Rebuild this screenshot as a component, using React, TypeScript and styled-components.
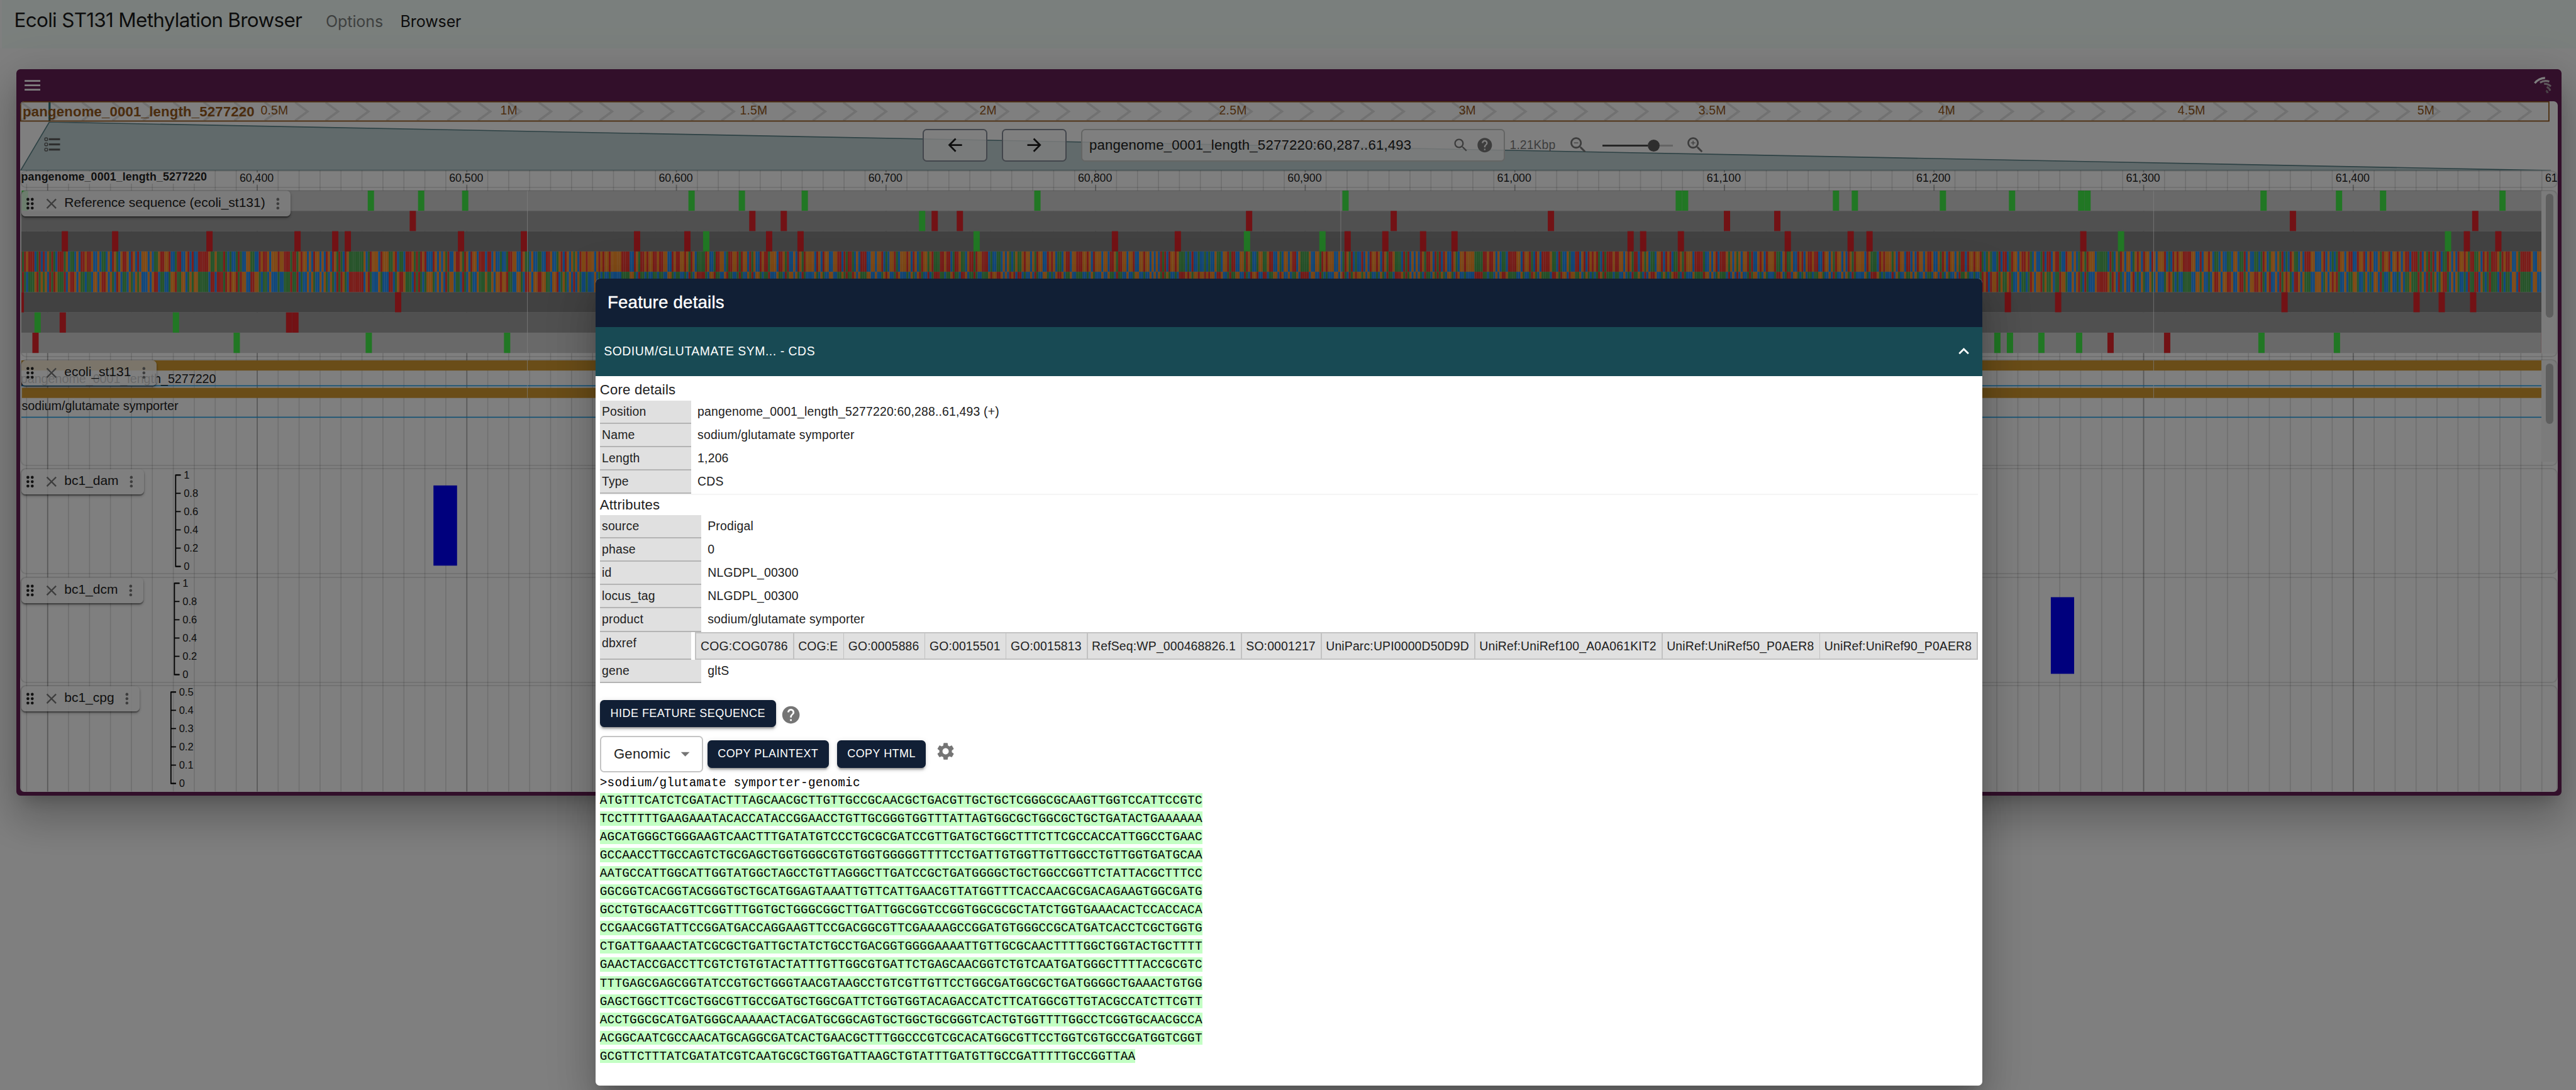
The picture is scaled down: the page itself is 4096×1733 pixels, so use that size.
import React from 'react';
import styled, { createGlobalStyle } from 'styled-components';

const SANS = '"Liberation Sans", Arial, Helvetica, sans-serif';
const MONO = '"Liberation Mono", "Courier New", monospace';

const SEQ_LINES = [
  'ATGTTTCATCTCGATACTTTAGCAACGCTTGTTGCCGCAACGCTGACGTTGCTGCTCGGGCGCAAGTTGGTCCATTCCGTC',
  'TCCTTTTTGAAGAAATACACCATACCGGAACCTGTTGCGGGTGGTTTATTAGTGGCGCTGGCGCTGCTGATACTGAAAAAA',
  'AGCATGGGCTGGGAAGTCAACTTTGATATGTCCCTGCGCGATCCGTTGATGCTGGCTTTCTTCGCCACCATTGGCCTGAAC',
  'GCCAACCTTGCCAGTCTGCGAGCTGGTGGGCGTGTGGTGGGGGTTTTCCTGATTGTGGTTGTTGGCCTGTTGGTGATGCAA',
  'AATGCCATTGGCATTGGTATGGCTAGCCTGTTAGGGCTTGATCCGCTGATGGGGCTGCTGGCCGGTTCTATTACGCTTTCC',
  'GGCGGTCACGGTACGGGTGCTGCATGGAGTAAATTGTTCATTGAACGTTATGGTTTCACCAACGCGACAGAAGTGGCGATG',
  'GCCTGTGCAACGTTCGGTTTGGTGCTGGGCGGCTTGATTGGCGGTCCGGTGGCGCGCTATCTGGTGAAACACTCCACCACA',
  'CCGAACGGTATTCCGGATGACCAGGAAGTTCCGACGGCGTTCGAAAAGCCGGATGTGGGCCGCATGATCACCTCGCTGGTG',
  'CTGATTGAAACTATCGCGCTGATTGCTATCTGCCTGACGGTGGGGAAAATTGTTGCGCAACTTTTGGCTGGTACTGCTTTT',
  'GAACTACCGACCTTCGTCTGTGTACTATTTGTTGGCGTGATTCTGAGCAACGGTCTGTCAATGATGGGCTTTTACCGCGTC',
  'TTTGAGCGAGCGGTATCCGTGCTGGGTAACGTAAGCCTGTCGTTGTTCCTGGCGATGGCGCTGATGGGGCTGAAACTGTGG',
  'GAGCTGGCTTCGCTGGCGTTGCCGATGCTGGCGATTCTGGTGGTACAGACCATCTTCATGGCGTTGTACGCCATCTTCGTT',
  'ACCTGGCGCATGATGGGCAAAAACTACGATGCGGCAGTGCTGGCTGCGGGTCACTGTGGTTTTGGCCTCGGTGCAACGCCA',
  'ACGGCAATCGCCAACATGCAGGCGATCACTGAACGCTTTGGCCCGTCGCACATGGCGTTCCTGGTCGTGCCGATGGTCGGT',
  'GCGTTCTTTATCGATATCGTCAATGCGCTGGTGATTAAGCTGTATTTGATGTTGCCGATTTTTGCCGGTTAA',
];
const SEQ = SEQ_LINES.join('');

const BP = 4.1302;
const TRACK_W = 4966;
const BLOCK_EDGES = [996.5, 2599.3, 4201];

const BASE_COLOR: Record<string, string> = { A: '#4ea855', C: '#2590f6', G: '#ff922a', T: '#f43a32' };
const COMPLEMENT: Record<string, string> = { A: 'T', T: 'A', C: 'G', G: 'C' };
const START = '#42ee48';
const STOP = '#e4252a';

const GlobalStyle = createGlobalStyle`
  html, body { margin: 0; padding: 0; background: #808080; overflow: hidden; }
  *, *::before, *::after { box-sizing: border-box; }
`;

const Root = styled.div`
  position: relative;
  zoom: 0.80693;
  width: 5076px;
  height: 2148px;
  overflow: hidden;
  background: #fff;
  color: #212121;
  font-family: ${SANS};
  font-size: 24px;
`;

const Page = styled.div`
  height: 2148px;
  padding-left: 4px;
`;

const Navbar = styled.header`
  display: flex;
  align-items: flex-start;
  height: 96px;
  padding: 16px 24px;
  background: #f5fffa;
  white-space: nowrap;
`;

const Brand = styled.div`
  width: 611px;
  font-family: Inter, ${SANS};
  font-size: 39px;
  line-height: 48px;
  letter-spacing: -0.88px;
  color: #1a1a1a;
`;

const NavItem = styled.div<{ $active?: boolean }>`
  margin: 2px 31px 0 3px;
  font-family: Inter, ${SANS};
  font-size: 31px;
  line-height: 48px;
  letter-spacing: -0.1px;
  color: ${p => (p.$active ? '#1a1a1a' : '#7c807e')};
`;

const Frame = styled.main`
  width: 5016px;
  height: 1432px;
  margin: 40px 0 0 28px;
  padding: 0 8px 8px;
  background: #651e54;
  border-radius: 8px;
  box-shadow: 0 22px 30px -14px rgba(0, 0, 0, 0.2), 0 48px 76px 6px rgba(0, 0, 0, 0.14), 0 18px 92px 16px rgba(0, 0, 0, 0.12);
`;

const AppBar = styled.div`
  display: flex;
  align-items: center;
  justify-content: space-between;
  height: 64px;
  padding: 1px 6px 0 3.5px;
  color: #fff;
`;

const View = styled.div`
  position: relative;
  height: 1360px;
  background: #fff;
  border-radius: 8px;
  overflow: hidden;
`;

const Overview = styled.div`
  position: relative;
  height: 40px;
`;

const Drawing = styled.svg`
  display: block;
  flex: none;
`;

const Layer = styled.svg`
  position: absolute;
  left: 0;
  top: 0;
`;

const NavRow = styled.div`
  position: relative;
  display: flex;
  align-items: center;
  height: 96px;
  padding: 0 0 4px 42.7px;
`;

const NavButton = styled.div`
  position: relative;
  display: flex;
  align-items: center;
  justify-content: center;
  width: 128px;
  height: 64px;
  margin-right: 28px;
  border: 2.5px solid #868d98;
  border-radius: 8px;
  background: rgba(255, 255, 255, 0.8);
  color: #1c1c1c;
`;

const SearchBox = styled.div`
  position: relative;
  display: flex;
  align-items: center;
  width: 835px;
  height: 64px;
  padding: 0 20px 0 14px;
  border: 2.5px solid #c8cac9;
  border-radius: 8px;
  background: rgba(255, 255, 255, 0.8);
  font-size: 27.43px;
  letter-spacing: 0.257px;
  color: #7b7b7b;
`;

const SearchText = styled.span`
  flex: 1;
  color: #212121;
`;

const Icon = styled.svg<{ $size: number; $ml?: number }>`
  position: relative;
  flex: none;
  display: block;
  width: ${p => p.$size}px;
  height: ${p => p.$size}px;
  margin-left: ${p => p.$ml || 0}px;
  fill: currentColor;
`;

const BpSpan = styled.span`
  position: relative;
  width: 112px;
  margin-left: 10px;
  letter-spacing: 0.1px;
  color: #7b7b7b;
`;

const Slider = styled.div`
  position: relative;
  display: flex;
  align-items: center;
  width: 139px;
  height: 24px;
  margin: 2px 20px 0 27px;
`;

const SliderFill = styled.div`
  width: 90px;
  height: 4px;
  background: #4c4c4c;
`;

const SliderThumb = styled.div`
  width: 24px;
  height: 24px;
  border-radius: 50%;
  background: #5c5c5c;
`;

const SliderRest = styled.div`
  flex: 1;
  height: 4px;
  background: #c9c9c9;
`;

const NavTools = styled.div`
  display: flex;
  align-items: center;
  margin-left: 1693.3px;
  color: #7a7a7a;
`;

const Panel = styled.section<{ $h: number }>`
  position: relative;
  height: ${p => p.$h}px;
  margin-bottom: 4px;
  padding: 2px;
  &::after {
    content: '';
    position: absolute;
    inset: 0;
    border: 2.5px solid rgba(0, 0, 0, 0.1);
    border-radius: 12px;
    pointer-events: none;
  }
`;

const PanelContent = styled.div`
  display: flex;
`;

const ScrollRail = styled.div<{ $h: number }>`
  width: 30px;
  height: ${p => p.$h}px;
  padding: 6px 6px 0 8px;
  background: #f6f6f6;
`;

const ScrollThumb = styled.div<{ $h: number }>`
  height: ${p => p.$h}px;
  border-radius: 8px;
  background: #bcbcbc;
`;

const TrackLabel = styled.div`
  position: absolute;
  left: 2px;
  top: 2px;
  display: flex;
  align-items: center;
  height: 50px;
  padding-right: 7.5px;
  border-radius: 8px;
  background: rgba(255, 255, 255, 0.8);
  box-shadow: 0 2px 2px rgba(0, 0, 0, 0.4), 0 3px 6px rgba(0, 0, 0, 0.22);
  color: #7a7a7a;
  white-space: nowrap;
`;

const TrackName = styled.span`
  margin: 0 8px 4px 8.5px;
  font-size: 26px;
  color: #212121;
`;

const Backdrop = styled.div`
  position: absolute;
  inset: 0;
  background: rgba(0, 0, 0, 0.5);
`;

const Dialog = styled.div`
  position: absolute;
  left: 1174px;
  top: 549px;
  width: 2732px;
  height: 1590px;
  border-radius: 8px;
  overflow: hidden;
  background: #fff;
`;

const DialogShadow = styled.div`
  position: absolute;
  left: 1174px;
  top: 549px;
  width: 2732px;
  height: 1590px;
  border-radius: 8px;
  box-shadow: 0 22px 30px -14px rgba(0, 0, 0, 0.2), 0 48px 76px 6px rgba(0, 0, 0, 0.14), 0 18px 92px 16px rgba(0, 0, 0, 0.12);
`;

const DialogTitle = styled.h2`
  height: 96px;
  margin: 0;
  padding-left: 23px;
  background: #111f35;
  color: #fff;
  font-size: 34.3px;
  font-weight: 400;
  line-height: 95px;
  letter-spacing: 0.25px;
  -webkit-text-stroke: 0.5px #fff;
`;

const AccordionTitle = styled.div`
  display: flex;
  align-items: center;
  justify-content: space-between;
  height: 96px;
  padding: 0 16px 2px;
  background: #184a54;
  color: #fff;
  letter-spacing: 0.686px;
`;

const DialogBody = styled.div`
  padding: 8px 8px 0;
`;

const SectionTitle = styled.div`
  font-size: 27.43px;
  line-height: 40px;
  letter-spacing: 0.257px;
`;

const FieldRow = styled.div<{ $h?: number }>`
  display: flex;
  height: ${p => p.$h || 46}px;
  line-height: 43.5px;
  letter-spacing: 0.257px;
`;

const FieldName = styled.div<{ $w: number }>`
  width: ${p => p.$w}px;
  padding-left: 4px;
  background: #e0e0e0;
  border-bottom: 2.5px solid #b4b4b4;
`;

const FieldValue = styled.div`
  padding-left: 12.5px;
`;

const Divider = styled.div`
  height: 2px;
  background: #f5f5f5;
`;

const ChipTable = styled.div`
  display: flex;
  flex: 1;
  gap: 2px;
  margin-left: 8px;
  padding: 2.5px;
  background: #c2c2c2;
`;

const Chip = styled.div`
  flex: 1 1 auto;
  padding-right: 2px;
  background: #e0e0e0;
  line-height: 51.5px;
  text-align: center;
  letter-spacing: 0.225px;
  white-space: nowrap;
`;

const ActionRow = styled.div<{ $mt: number; $h: number }>`
  display: flex;
  align-items: center;
  height: ${p => p.$h}px;
  margin-top: ${p => p.$mt}px;
  color: #757575;
`;

const ActionButton = styled.div<{ $w: number; $ml?: number }>`
  display: flex;
  align-items: center;
  justify-content: center;
  width: ${p => p.$w}px;
  height: 54px;
  margin-left: ${p => p.$ml || 0}px;
  border-radius: 8px;
  background: #111f35;
  color: #fff;
  font-size: 22.3px;
  letter-spacing: 0.58px;
  white-space: nowrap;
  box-shadow: 0 6px 2px -4px rgba(0, 0, 0, 0.2), 0 4px 4px rgba(0, 0, 0, 0.14), 0 2px 10px rgba(0, 0, 0, 0.12);
`;

const Raised = styled.div<{ $by: number }>`
  padding-bottom: ${p => p.$by}px;
`;

const Lowered = styled.div<{ $by: number }>`
  padding-top: ${p => p.$by}px;
`;

const Select = styled.div`
  display: flex;
  align-items: center;
  justify-content: space-between;
  width: 204px;
  height: 72px;
  padding: 0 13px 0 25px;
  border: 2.5px solid #c4c4c4;
  border-radius: 8px;
  color: #757575;
  font-size: 27.43px;
  letter-spacing: 0.257px;
`;

const SelectValue = styled.span`
  color: #212121;
`;

const Fasta = styled.div`
  padding-top: 3px;
  font-family: ${MONO};
  font-size: 24px;
  letter-spacing: 0.259px;
  line-height: 39px;
  color: #000;
`;

const FastaHeader = styled.div`
  height: 36px;
`;

const SeqLine = styled.div`
  display: flex;
  height: 36px;
  padding-top: 2px;
`;

const SeqText = styled.span`
  height: 28px;
  line-height: 32px;
  background: #c3ffc4;
  white-space: pre;
`;

const P = {
  menu: 'M3 18h18v-2H3v2zm0-5h18v-2H3v2zm0-7v2h18V6H3z',
  back: 'M20 11H7.83l5.59-5.59L12 4l-8 8 8 8 1.41-1.41L7.83 13H20v-2z',
  forward: 'M12 4l-1.41 1.41L16.17 11H4v2h12.17l-5.58 5.59L12 20l8-8z',
  search:
    'M15.5 14h-.79l-.28-.27C15.41 12.59 16 11.11 16 9.5 16 5.91 13.09 3 9.5 3S3 5.91 3 9.5 5.91 16 9.5 16c1.61 0 3.09-.59 4.23-1.57l.27.28v.79l5 4.99L20.49 19l-4.99-5zm-6 0C7.01 14 5 11.99 5 9.5S7.01 5 9.5 5 14 7.01 14 9.5 11.99 14 9.5 14z',
  minus: 'M7 9h5v1H7z',
  plus: 'M12 10h-2v2H9v-2H7V9h2V7h1v2h2v1z',
  help:
    'M12 2C6.48 2 2 6.48 2 12s4.48 10 10 10 10-4.48 10-10S17.52 2 12 2zm1 17h-2v-2h2v2zm2.07-7.75l-.9.92C13.45 12.9 13 13.5 13 15h-2v-.5c0-1.1.45-2.1 1.17-2.83l1.24-1.26c.37-.36.59-.86.59-1.41 0-1.1-.9-2-2-2s-2 .9-2 2H8c0-2.21 1.79-4 4-4s4 1.79 4 4c0 .88-.36 1.68-.93 2.25z',
  gear:
    'M19.14 12.94c.04-.3.06-.61.06-.94 0-.32-.02-.64-.07-.94l2.03-1.58c.18-.14.23-.41.12-.61l-1.92-3.32c-.12-.22-.37-.29-.59-.22l-2.39.96c-.5-.38-1.03-.7-1.62-.94l-.36-2.54c-.04-.24-.24-.41-.48-.41h-3.84c-.24 0-.43.17-.47.41l-.36 2.54c-.59.24-1.13.57-1.62.94l-2.39-.96c-.22-.08-.47 0-.59.22L2.74 8.87c-.12.21-.08.47.12.61l2.03 1.58c-.05.3-.09.63-.09.94s.02.64.07.94l-2.03 1.58c-.18.14-.23.41-.12.61l1.92 3.32c.12.22.37.29.59.22l2.39-.96c.5.38 1.03.7 1.62.94l.36 2.54c.05.24.24.41.48.41h3.84c.24 0 .44-.17.47-.41l.36-2.54c.59-.24 1.13-.56 1.62-.94l2.39.96c.22.08.47 0 .59-.22l1.92-3.32c.12-.22.07-.47-.12-.61l-2.01-1.58zM12 15.6c-1.98 0-3.6-1.62-3.6-3.6s1.62-3.6 3.6-3.6 3.6 1.62 3.6 3.6-1.62 3.6-3.6 3.6z',
  close:
    'M19 6.41L17.59 5 12 10.59 6.41 5 5 6.41 10.59 12 5 17.59 6.41 19 12 13.41 17.59 19 19 17.59 13.41 12z',
  more:
    'M12 8c1.1 0 2-.9 2-2s-.9-2-2-2-2 .9-2 2 .9 2 2 2zm0 2c-1.1 0-2 .9-2 2s.9 2 2 2 2-.9 2-2-.9-2-2-2zm0 6c-1.1 0-2 .9-2 2s.9 2 2 2 2-.9 2-2-.9-2-2-2z',
  expandLess: 'M12 8l-6 6 1.41 1.41L12 10.83l4.59 4.58L18 14z',
  dropDown: 'M7 10l5 5 5-5z',
};

function Glyph({ d, size = 41.14, ml }: { d: string; size?: number; ml?: number }) {
  return (
    <Icon viewBox="0 0 24 24" $size={size} $ml={ml}>
      <path d={d} />
    </Icon>
  );
}

function DragIcon() {
  return (
    <Icon viewBox="0 0 24 24" $size={34.3}>
      {[9, 15].map(x => [6, 12, 18].map(y => <circle key={`${x}-${y}`} cx={x} cy={y} r={2} fill="#222" />))}
    </Icon>
  );
}

function TrackSelectorIcon() {
  return (
    <Icon viewBox="0 1.7 42 42" $size={42}>
      {[10.8, 21, 31.2].map(y => (
        <g key={y}>
          <rect x={5.3} y={y - 2.7} width={5.4} height={5.4} rx={1.6} fill="none" stroke="#5c5c5c" strokeWidth={1.8} />
          <rect x={13.3} y={y - 1.9} width={22} height={3.8} fill="#5c5c5c" />
        </g>
      ))}
    </Icon>
  );
}

function Logo() {
  const arcs: [string, string, number][] = [
    ['M79 115Q102 86 140 84', '#ffffff', 12],
    ['M110 112Q136 96 165 106', '#d6d0d4', 12],
    ['M134 119Q158 118 174 134', '#b9adb5', 11],
    ['M150 137Q165 144 170 160', '#a496a0', 12],
    ['M146 158Q153 163 155 174', '#8f7d8a', 12],
  ];
  return (
    <Drawing width={42} height={42} viewBox="70 66 126 126">
      {arcs.map(([d, c, w]) => (
        <path key={d} d={d} stroke={c} strokeWidth={w} fill="none" />
      ))}
    </Drawing>
  );
}

function OverviewBar() {
  const brown = '#96581a';
  return (
    <Layer width={5000} height={40}>
      {Array.from({ length: 83 }, (_, k) => (
        <path key={k} d={`M${2 + k * 60} 2L${26.5 + k * 60} 20L${2 + k * 60} 38`} fill="none" stroke="#e2e2e2" strokeWidth={4.5} />
      ))}
      <rect x={56} y={0} width={4} height={40} fill="#2f7078" />
      <rect x={1} y={1} width={4982} height={38} fill="none" stroke={brown} strokeWidth={2.2} />
      <text x={5} y={29.8} fontFamily={SANS} fontWeight={700} fontSize={27.43} letterSpacing={0.257} fill={brown}>
        pangenome_0001_length_5277220
      </text>
      {Array.from({ length: 10 }, (_, i) => (
        <text key={i} x={474 + i * 472.2} y={26} fontFamily={SANS} fontSize={24} letterSpacing={0.257} fill={brown}>
          {`${(i + 1) / 2}M`}
        </text>
      ))}
    </Layer>
  );
}

function ZoomWedge() {
  return (
    <Layer width={5000} height={96}>
      <path d="M57.5 0L1 95.5H4987Z" fill="#c2d4d6" stroke="#5a8288" strokeWidth={2} />
    </Layer>
  );
}

const TICKS = Array.from({ length: 121 }, (_, k) => ({
  x: 12.8 + k * BP * 10,
  major: k % 10 === 1,
})).filter(t => t.x < 4999);

function GridLines() {
  return (
    <Layer width={5000} height={1360}>
      {TICKS.map(t => (
        <rect key={t.x} x={t.x - 1} y={136} width={t.major ? 2.2 : 2} height={1224} fill={t.major ? '#b0b0b0' : '#dedede'} />
      ))}
    </Layer>
  );
}

function Ruler() {
  return (
    <Layer width={5000} height={34}>
      {Array.from({ length: 12 }, (_, i) => i + 1).map(i => {
        const x = 466 + (i - 1) * BP * 100;
        const n = 60300 + i * 100;
        return (
          <g key={i}>
            <rect x={x - 38} y={4} width={76} height={24} fill="#fff" />
            <text x={x} y={22} textAnchor="middle" fontFamily={SANS} fontSize={22} fill="#212121">
              {n.toLocaleString('en-US')}
            </text>
          </g>
        );
      })}
      <rect x={2} y={2} width={368} height={24} fill="#fff" />
      <text x={2} y={20} fontFamily={SANS} fontWeight={700} fontSize={22} letterSpacing={0.19} fill="#212121">
        pangenome_0001_length_5277220
      </text>
    </Layer>
  );
}

function revComp(s: string) {
  return s.split('').reverse().map(c => COMPLEMENT[c]).join('');
}

function codonColor(codon: string) {
  if (codon === 'ATG') return START;
  if (codon === 'TAA' || codon === 'TAG' || codon === 'TGA') return STOP;
  return null;
}

const FRAMES = [
  { y: 0, phase: 0, bg: '#d2d2d2', reverse: false },
  { y: 40, phase: 2, bg: '#a1a1a1', reverse: false },
  { y: 80, phase: 1, bg: '#828282', reverse: false },
  { y: 200, phase: 1, bg: '#828282', reverse: true },
  { y: 240, phase: 0, bg: '#a1a1a1', reverse: true },
  { y: 280, phase: 2, bg: '#d2d2d2', reverse: true },
];

function FrameRow({ y, phase, bg, reverse }: (typeof FRAMES)[number]) {
  const marks: React.ReactNode[] = [];
  for (let p = phase; p + 3 <= SEQ.length; p += 3) {
    const codon = SEQ.slice(p, p + 3);
    const fill = codonColor(reverse ? revComp(codon) : codon);
    if (fill) marks.push(<rect key={p} x={1 + p * BP} y={y} width={BP * 3} height={40} fill={fill} />);
  }
  return (
    <g>
      <rect x={0} y={y} width={TRACK_W} height={40} fill={bg} />
      {marks}
    </g>
  );
}

function SequenceCanvas() {
  return (
    <Drawing width={TRACK_W} height={320}>
      {FRAMES.map(f => (
        <FrameRow key={f.y} {...f} />
      ))}
      <rect x={0} y={200} width={5} height={40} fill={STOP} />
      {SEQ.split('').map((b, i) => (
        <g key={i}>
          <rect x={1 + i * BP} y={120} width={BP} height={40} fill={BASE_COLOR[b]} />
          <rect x={1 + i * BP} y={160} width={BP} height={40} fill={BASE_COLOR[COMPLEMENT[b]]} />
        </g>
      ))}
      <rect x={0} y={120} width={1.2} height={40} fill={BASE_COLOR.T} />
      <rect x={0} y={160} width={1.2} height={40} fill={BASE_COLOR.A} />
      {BLOCK_EDGES.map(x => (
        <rect key={x} x={x} y={0} width={1.2} height={320} fill="#fff" fillOpacity={0.75} />
      ))}
    </Drawing>
  );
}

function GeneCanvas() {
  return (
    <Drawing width={TRACK_W} height={200}>
      <rect x={0} y={0} width={TRACK_W} height={20} fill="#d49b30" />
      <rect x={0} y={49} width={TRACK_W} height={2} fill="#20a0e8" />
      <rect x={1} y={54} width={TRACK_W} height={20} fill="#d49b30" />
      <rect x={0} y={111} width={TRACK_W} height={2} fill="#20a0e8" />
      <text x={-1.5} y={44} fontFamily={SANS} fontSize={24.4} fill="#212121">
        pangenome_0001_length_5277220
      </text>
      <text x={0.5} y={97.7} fontFamily={SANS} fontSize={24.5} fill="#212121">
        sodium/glutamate symporter
      </text>
      {BLOCK_EDGES.map(x => (
        <rect key={x} x={x} y={0} width={1.2} height={74} fill="#fff" fillOpacity={0.75} />
      ))}
    </Drawing>
  );
}

type Bar = { x: number; w: number; top: number; bottom: number };

function QuantCanvas({ axis, labels, bar }: { axis: number; labels: string[]; bar?: Bar }) {
  return (
    <Drawing width={TRACK_W} height={206}>
      {bar && <rect x={bar.x} y={bar.top} width={bar.w} height={bar.bottom - bar.top} fill="#0000fa" />}
      <path d={`M${axis + 10} 11.5H${axis}V191.5H${axis + 10}`} fill="none" stroke="#000" strokeWidth={2.2} />
      {labels.map((l, i) => (
        <g key={l}>
          <path d={`M${axis} ${11.5 + i * 36}h10`} stroke="#000" strokeWidth={2.2} />
          <text x={axis + 16} y={18.7 + i * 36} fontFamily={SANS} fontSize={20.4} fill="#1a1a1a">
            {l}
          </text>
        </g>
      ))}
    </Drawing>
  );
}

function Label({ name }: { name: string }) {
  return (
    <TrackLabel>
      <DragIcon />
      <Glyph d={P.close} size={34.3} ml={7.7} />
      <TrackName>{name}</TrackName>
      <Glyph d={P.more} size={34.3} />
    </TrackLabel>
  );
}

const UNIT = ['1', '0.8', '0.6', '0.4', '0.2', '0'];
const HALF = ['0.5', '0.4', '0.3', '0.2', '0.1', '0'];

const CORE: [string, string][] = [
  ['Position', 'pangenome_0001_length_5277220:60,288..61,493 (+)'],
  ['Name', 'sodium/glutamate symporter'],
  ['Length', '1,206'],
  ['Type', 'CDS'],
];

const ATTRS: [string, string][] = [
  ['source', 'Prodigal'],
  ['phase', '0'],
  ['id', 'NLGDPL_00300'],
  ['locus_tag', 'NLGDPL_00300'],
  ['product', 'sodium/glutamate symporter'],
];

const DBXREF = [
  'COG:COG0786',
  'COG:E',
  'GO:0005886',
  'GO:0015501',
  'GO:0015813',
  'RefSeq:WP_000468826.1',
  'SO:0001217',
  'UniParc:UPI0000D50D9D',
  'UniRef:UniRef100_A0A061KIT2',
  'UniRef:UniRef50_P0AER8',
  'UniRef:UniRef90_P0AER8',
];

function Field({ name, value, w }: { name: string; value: string; w: number }) {
  return (
    <FieldRow>
      <FieldName $w={w}>{name}</FieldName>
      <FieldValue>{value}</FieldValue>
    </FieldRow>
  );
}

function GenomeView() {
  return (
    <Frame>
      <AppBar>
        <Glyph d={P.menu} />
        <Logo />
      </AppBar>
      <View>
        <GridLines />
        <Overview>
          <OverviewBar />
        </Overview>
        <NavRow>
          <ZoomWedge />
          <TrackSelectorIcon />
          <NavTools>
            <NavButton>
              <Glyph d={P.back} />
            </NavButton>
            <NavButton>
              <Glyph d={P.forward} />
            </NavButton>
            <SearchBox>
              <SearchText>pangenome_0001_length_5277220:60,287..61,493</SearchText>
              <Glyph d={P.search} size={34.3} />
              <Glyph d={P.help} size={34.3} ml={12.5} />
            </SearchBox>
            <BpSpan>1.21Kbp</BpSpan>
            <Glyph d={P.search + P.minus} ml={2} />
            <Slider>
              <SliderFill />
              <SliderThumb />
              <SliderRest />
            </Slider>
            <Glyph d={P.search + P.plus} ml={4} />
          </NavTools>
        </NavRow>
        <Panel $h={34}>
          <Ruler />
        </Panel>
        <Panel $h={330}>
          <PanelContent>
            <SequenceCanvas />
            <ScrollRail $h={320}>
              <ScrollThumb $h={244} />
            </ScrollRail>
          </PanelContent>
          <Label name="Reference sequence (ecoli_st131)" />
        </Panel>
        <Panel $h={210}>
          <PanelContent>
            <GeneCanvas />
            <ScrollRail $h={200}>
              <ScrollThumb $h={120} />
            </ScrollRail>
          </PanelContent>
          <Label name="ecoli_st131" />
        </Panel>
        <Panel $h={210}>
          <QuantCanvas axis={304} labels={UNIT} bar={{ x: 812, w: 46.5, top: 32, bottom: 190 }} />
          <Label name="bc1_dam" />
        </Panel>
        <Panel $h={210}>
          <QuantCanvas axis={301.6} labels={UNIT} bar={{ x: 3999, w: 46, top: 39, bottom: 190 }} />
          <Label name="bc1_dcm" />
        </Panel>
        <Panel $h={216}>
          <QuantCanvas axis={294.7} labels={HALF} />
          <Label name="bc1_cpg" />
        </Panel>
      </View>
    </Frame>
  );
}

function FeatureDialog() {
  return (
    <Dialog>
      <DialogTitle>Feature details</DialogTitle>
      <AccordionTitle>
        SODIUM/GLUTAMATE SYM... - CDS
        <Glyph d={P.expandLess} />
      </AccordionTitle>
      <DialogBody>
        <SectionTitle>Core details</SectionTitle>
        {CORE.map(([k, v]) => (
          <Field key={k} name={k} value={v} w={180} />
        ))}
        <Divider />
        <SectionTitle>Attributes</SectionTitle>
        {ATTRS.map(([k, v]) => (
          <Field key={k} name={k} value={v} w={200} />
        ))}
        <FieldRow $h={55}>
          <FieldName $w={180}>dbxref</FieldName>
          <ChipTable>
            {DBXREF.map(c => (
              <Chip key={c}>{c}</Chip>
            ))}
          </ChipTable>
        </FieldRow>
        <Field name="gene" value="gltS" w={200} />
        <ActionRow $mt={33} $h={54}>
          <ActionButton $w={347}>HIDE FEATURE SEQUENCE</ActionButton>
          <Lowered $by={6}>
            <Glyph d={P.help} ml={9} />
          </Lowered>
        </ActionRow>
        <ActionRow $mt={17} $h={72}>
          <Select>
            <SelectValue>Genomic</SelectValue>
            <Glyph d={P.dropDown} />
          </Select>
          <ActionButton $w={239} $ml={8}>COPY PLAINTEXT</ActionButton>
          <ActionButton $w={175} $ml={16.5}>COPY HTML</ActionButton>
          <Raised $by={12}>
            <Glyph d={P.gear} ml={18} />
          </Raised>
        </ActionRow>
        <Fasta>
          <FastaHeader>&gt;sodium/glutamate symporter-genomic</FastaHeader>
          {SEQ_LINES.map(l => (
            <SeqLine key={l}>
              <SeqText>{l}</SeqText>
            </SeqLine>
          ))}
        </Fasta>
      </DialogBody>
    </Dialog>
  );
}

export default function App() {
  return (
    <>
      <GlobalStyle />
      <Root>
        <Page>
          <Navbar>
            <Brand>Ecoli ST131 Methylation Browser</Brand>
            <NavItem>Options</NavItem>
            <NavItem $active>Browser</NavItem>
          </Navbar>
          <GenomeView />
        </Page>
        <Backdrop />
        <DialogShadow />
        <FeatureDialog />
      </Root>
    </>
  );
}
